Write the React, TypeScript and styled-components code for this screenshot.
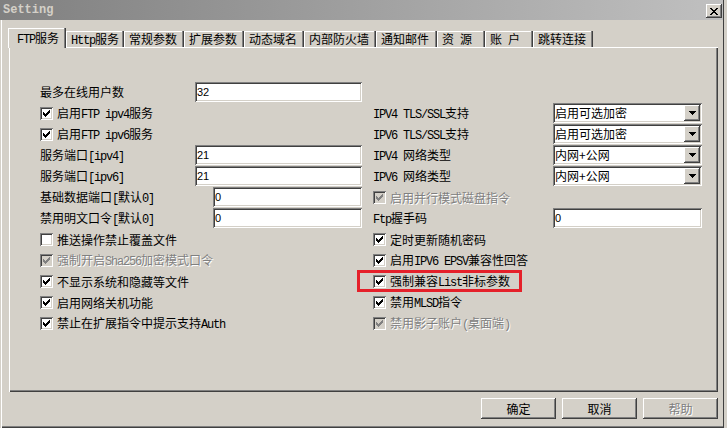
import React from "react";
import styled, { createGlobalStyle, css } from "styled-components";

const FACE = "#d4d0c8";
const HI = "#ffffff";
const SHADOW = "#808080";
const DARK = "#404040";

const GlobalStyle = createGlobalStyle`
  html, body { margin: 0; padding: 0; background: ${FACE}; }
  body {
    font-family: "Noto Sans CJK SC", "Liberation Sans", sans-serif;
    font-size: 12px;
    color: #000;
  }
  *, *::before, *::after { box-sizing: border-box; }
`;

const raised = css`
  box-shadow: inset -1px -1px ${DARK}, inset 1px 1px ${HI}, inset -2px -2px ${SHADOW};
`;
const sunken = css`
  box-shadow: inset 1px 1px ${SHADOW}, inset -1px -1px ${HI}, inset 2px 2px ${DARK},
    inset -2px -2px ${FACE};
`;
const disabledText = css`
  color: ${SHADOW};
  text-shadow: 1px 1px 0 ${HI};
`;

const Latin = styled.span`
  font-family: "Liberation Mono", monospace;
  letter-spacing: -1.2px;
`;

function Mixed({ text }: { text: string }) {
  const parts = text.match(/[\x20-\x7e]+|[^\x20-\x7e]+/g) ?? [];
  return (
    <>
      {parts.map((p, i) =>
        /^[\x20-\x7e]/.test(p) ? <Latin key={i}>{p}</Latin> : <span key={i}>{p}</span>
      )}
    </>
  );
}

const Window = styled.div`
  width: 727px;
  height: 428px;
  display: flex;
  flex-direction: column;
  background: ${FACE};
  overflow: hidden;
  box-shadow: inset 1px 0 ${FACE}, inset 2px 0 ${HI}, inset -3px 0 ${FACE},
    inset -4px 0 ${DARK}, inset 0 -1px ${DARK}, inset 0 -2px ${SHADOW};
`;

const TitleBar = styled.div`
  height: 20px;
  margin-right: 4px;
  padding: 0 1px 0 3px;
  display: flex;
  justify-content: space-between;
  align-items: flex-start;
  background: linear-gradient(to right, #808080, #c0c0c0);
`;

const Title = styled.span`
  font-family: "Liberation Mono", monospace;
  font-weight: bold;
  font-size: 12px;
  line-height: 20px;
  color: ${FACE};
`;

const CloseButton = styled.button`
  width: 16px;
  height: 14px;
  margin-top: 4px;
  padding: 0;
  border: 0;
  background: ${FACE};
  ${raised};
  display: flex;
  align-items: center;
  justify-content: center;
`;

const Body = styled.div`
  flex: 1;
  display: flex;
  flex-direction: column;
  padding: 8px 9px 0 9px;
`;

const TabStrip = styled.div`
  display: flex;
  align-items: flex-end;
  height: 20px;
  margin: 0 0 -1px -1px;
  position: relative;
  z-index: 1;
`;

const Tab = styled.div<{ $active?: boolean; $w: number }>`
  width: ${(p) => p.$w}px;
  height: ${(p) => (p.$active ? 20 : 16)}px;
  margin-bottom: ${(p) => (p.$active ? 0 : 1)}px;
  padding: ${(p) => (p.$active ? "2px 0 0 9px" : "0 0 0 5px")};
  line-height: 16px;
  white-space: pre;
  background: ${FACE};
  box-shadow: inset -1px 0 ${DARK}, inset -2px 0 ${SHADOW}, inset 1px 1px ${HI};
`;

const Panel = styled.div`
  height: 345px;
  position: relative;
  z-index: 0;
  padding: 35px 0 0 31px;
  display: flex;
  gap: 11px;
  box-shadow: inset 1px 1px ${HI}, inset -1px -1px ${DARK}, inset -2px -2px ${SHADOW};
`;

const Column = styled.div<{ $w: number; $offset?: number }>`
  width: ${(p) => p.$w}px;
  padding-top: ${(p) => p.$offset ?? 0}px;
  display: flex;
  flex-direction: column;
`;

const FieldRow = styled.div`
  display: flex;
  height: 21px;
  align-items: flex-start;
`;

const FieldLabel = styled.span<{ $w: number }>`
  width: ${(p) => p.$w}px;
  line-height: 20px;
  white-space: pre;
`;

const TextBox = styled.input<{ $w: number }>`
  width: ${(p) => p.$w}px;
  height: 20px;
  margin: 0;
  border: 0;
  outline: none;
  padding: 0 0 0 2px;
  background: #fff;
  ${sunken};
  font-family: "Liberation Sans", sans-serif;
  font-size: 11px;
  color: #000;
`;

const Combo = styled.div<{ $w: number }>`
  width: ${(p) => p.$w}px;
  height: 20px;
  padding: 2px;
  display: flex;
  align-items: center;
  background: #fff;
  ${sunken};
`;

const ComboValue = styled.span`
  flex: 1;
  padding-left: 0;
  line-height: 16px;
  white-space: pre;
`;

const ComboArrow = styled.span`
  width: 16px;
  height: 16px;
  flex: none;
  display: flex;
  align-items: center;
  justify-content: center;
  background: ${FACE};
  ${raised};
`;

const CheckRow = styled.div<{ $highlight?: boolean }>`
  display: flex;
  align-items: center;
  gap: 4px;
  height: 21px;
  position: relative;
  ${(p) =>
    p.$highlight &&
    css`
      &::after {
        content: "";
        position: absolute;
        left: -16px;
        top: -1px;
        width: 165px;
        height: 22px;
        border: 3px solid #e5202a;
        pointer-events: none;
      }
    `}
`;

const Box = styled.span<{ $disabled?: boolean }>`
  width: 13px;
  height: 13px;
  flex: none;
  display: block;
  background: ${(p) => (p.$disabled ? FACE : "#fff")};
  ${sunken};
  svg {
    display: block;
  }
`;

const CheckText = styled.span<{ $disabled?: boolean }>`
  line-height: 21px;
  white-space: pre;
  ${(p) => p.$disabled && disabledText};
`;

const ButtonRow = styled.div`
  display: flex;
  justify-content: flex-end;
  gap: 6px;
  margin-top: 6px;
`;

const Button = styled.button<{ $disabled?: boolean }>`
  width: 75px;
  height: 21px;
  padding: 0;
  border: 0;
  background: ${FACE};
  ${raised};
  font-family: "Noto Sans CJK SC", sans-serif;
  font-size: 12px;
  line-height: 21px;
  color: #000;
  ${(p) => p.$disabled && disabledText};
`;

const CHECK_TOPS = [2, 3, 4, 3, 2, 1, 0];
const checkPath = CHECK_TOPS.map((t, c) => `M${3 + c} ${3 + t}h1v3h-1z`).join("");

function CheckBox({ checked, disabled }: { checked?: boolean; disabled?: boolean }) {
  return (
    <Box $disabled={disabled}>
      {checked && (
        <svg width="13" height="13" viewBox="0 0 13 13" shapeRendering="crispEdges">
          <path d={checkPath} fill={disabled ? SHADOW : "#000"} />
        </svg>
      )}
    </Box>
  );
}

const X_ROWS: [number, number][][] = [
  [[0, 2], [6, 2]],
  [[1, 2], [5, 2]],
  [[2, 4]],
  [[3, 2]],
  [[2, 4]],
  [[1, 2], [5, 2]],
  [[0, 2], [6, 2]],
];
const xPath = X_ROWS.map((segs, y) => segs.map(([x, w]) => `M${x} ${y}h${w}v1h-${w}z`).join("")).join("");

function CloseGlyph() {
  return (
    <svg width="8" height="7" viewBox="0 0 8 7" shapeRendering="crispEdges">
      <path d={xPath} fill="#000" />
    </svg>
  );
}

function ArrowGlyph() {
  return (
    <svg width="7" height="4" viewBox="0 0 7 4" shapeRendering="crispEdges">
      <path d="M0 0h7v1H0zM1 1h5v1H1zM2 2h3v1H2zM3 3h1v1H3z" fill="#000" />
    </svg>
  );
}

type Item =
  | { kind: "field"; label: string; value: string; labelW: number; ctrlW: number }
  | { kind: "combo"; label: string; value: string; labelW: number; ctrlW: number }
  | { kind: "check"; label: string; checked: boolean; disabled?: boolean; highlight?: boolean };

const TABS = [
  { label: "FTP服务", w: 58 },
  { label: "Http服务", w: 58 },
  { label: "常规参数", w: 60 },
  { label: "扩展参数", w: 60 },
  { label: "动态域名", w: 60 },
  { label: "内部防火墙", w: 72 },
  { label: "通知邮件", w: 61 },
  { label: "资 源", w: 48 },
  { label: "账 户", w: 48 },
  { label: "跳转连接", w: 60 },
];

const LEFT: Item[] = [
  { kind: "field", label: "最多在线用户数", value: "32", labelW: 155, ctrlW: 167 },
  { kind: "check", label: "启用FTP ipv4服务", checked: true },
  { kind: "check", label: "启用FTP ipv6服务", checked: true },
  { kind: "field", label: "服务端口[ipv4]", value: "21", labelW: 155, ctrlW: 167 },
  { kind: "field", label: "服务端口[ipv6]", value: "21", labelW: 155, ctrlW: 167 },
  { kind: "field", label: "基础数据端口[默认0]", value: "0", labelW: 173, ctrlW: 149 },
  { kind: "field", label: "禁用明文口令[默认0]", value: "0", labelW: 173, ctrlW: 149 },
  { kind: "check", label: "推送操作禁止覆盖文件", checked: false },
  { kind: "check", label: "强制开启Sha256加密模式口令", checked: true, disabled: true },
  { kind: "check", label: "不显示系统和隐藏等文件", checked: true },
  { kind: "check", label: "启用网络关机功能", checked: true },
  { kind: "check", label: "禁止在扩展指令中提示支持Auth", checked: true },
];

const RIGHT: Item[] = [
  { kind: "combo", label: "IPV4 TLS/SSL支持", value: "启用可选加密", labelW: 180, ctrlW: 149 },
  { kind: "combo", label: "IPV6 TLS/SSL支持", value: "启用可选加密", labelW: 180, ctrlW: 149 },
  { kind: "combo", label: "IPV4 网络类型", value: "内网+公网", labelW: 180, ctrlW: 149 },
  { kind: "combo", label: "IPV6 网络类型", value: "内网+公网", labelW: 180, ctrlW: 149 },
  { kind: "check", label: "启用并行模式磁盘指令", checked: true, disabled: true },
  { kind: "field", label: "Ftp握手码", value: "0", labelW: 180, ctrlW: 149 },
  { kind: "check", label: "定时更新随机密码", checked: true },
  { kind: "check", label: "启用IPV6 EPSV兼容性回答", checked: true },
  { kind: "check", label: "强制兼容List非标参数", checked: true, highlight: true },
  { kind: "check", label: "禁用MLSD指令", checked: true },
  { kind: "check", label: "禁用影子账户(桌面端)", checked: true, disabled: true },
];

function Row({ item }: { item: Item }) {
  if (item.kind === "check") {
    return (
      <CheckRow $highlight={item.highlight}>
        <CheckBox checked={item.checked} disabled={item.disabled} />
        <CheckText $disabled={item.disabled}>
          <Mixed text={item.label} />
        </CheckText>
      </CheckRow>
    );
  }
  return (
    <FieldRow>
      <FieldLabel $w={item.labelW}>
        <Mixed text={item.label} />
      </FieldLabel>
      {item.kind === "field" ? (
        <TextBox $w={item.ctrlW} defaultValue={item.value} readOnly />
      ) : (
        <Combo $w={item.ctrlW}>
          <ComboValue>{item.value}</ComboValue>
          <ComboArrow>
            <ArrowGlyph />
          </ComboArrow>
        </Combo>
      )}
    </FieldRow>
  );
}

export default function App() {
  return (
    <>
      <GlobalStyle />
      <Window>
        <TitleBar>
          <Title>Setting</Title>
          <CloseButton aria-label="关闭">
            <CloseGlyph />
          </CloseButton>
        </TitleBar>
        <Body>
          <TabStrip>
            {TABS.map((t, i) => (
              <Tab key={t.label} $w={t.w} $active={i === 0}>
                <Mixed text={t.label} />
              </Tab>
            ))}
          </TabStrip>
          <Panel>
            <Column $w={322}>
              {LEFT.map((it, i) => (
                <Row key={i} item={it} />
              ))}
            </Column>
            <Column $w={329} $offset={21}>
              {RIGHT.map((it, i) => (
                <Row key={i} item={it} />
              ))}
            </Column>
          </Panel>
          <ButtonRow>
            <Button>确定</Button>
            <Button>取消</Button>
            <Button $disabled>帮助</Button>
          </ButtonRow>
        </Body>
      </Window>
    </>
  );
}
